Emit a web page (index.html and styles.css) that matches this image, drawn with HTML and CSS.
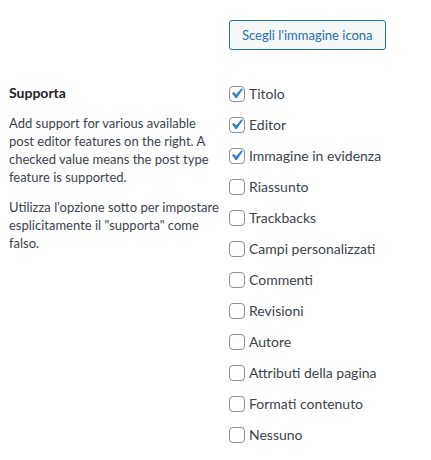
FILE: index.html
```html
<!DOCTYPE html>
<html lang="it">
<head>
<meta charset="utf-8">
<link rel="stylesheet" href="styles.css">
</head>
<body>
<div class="settings">
  <div class="row row-top">
    <div class="col-label"></div>
    <div class="col-field">
      <button class="button" type="button">Scegli l'immagine icona</button>
    </div>
  </div>
  <div class="row">
    <div class="col-label">
      <h3 class="heading">Supporta</h3>
      <p class="desc">Add support for various available post editor features on the right. A checked value means the post type feature is supported.</p>
      <p class="desc desc-nowrap">Utilizza l'opzione sotto per impostare<br>esplicitamente il "supporta" come<br>falso.</p>
    </div>
    <div class="col-field">
      <ul class="checks">
        <li class="check"><span class="box"><svg viewBox="0 0 20 20" class="tick"><path d="M14.83 4.89l1.34.94-5.81 8.38H9.02L5.78 9.67l1.34-1.25 2.57 2.4z"/></svg></span><span class="label">Titolo</span></li>
        <li class="check"><span class="box"><svg viewBox="0 0 20 20" class="tick"><path d="M14.83 4.89l1.34.94-5.81 8.38H9.02L5.78 9.67l1.34-1.25 2.57 2.4z"/></svg></span><span class="label">Editor</span></li>
        <li class="check"><span class="box"><svg viewBox="0 0 20 20" class="tick"><path d="M14.83 4.89l1.34.94-5.81 8.38H9.02L5.78 9.67l1.34-1.25 2.57 2.4z"/></svg></span><span class="label">Immagine in evidenza</span></li>
        <li class="check"><span class="box"></span><span class="label">Riassunto</span></li>
        <li class="check"><span class="box"></span><span class="label">Trackbacks</span></li>
        <li class="check"><span class="box"></span><span class="label">Campi personalizzati</span></li>
        <li class="check"><span class="box"></span><span class="label">Commenti</span></li>
        <li class="check"><span class="box"></span><span class="label">Revisioni</span></li>
        <li class="check"><span class="box"></span><span class="label">Autore</span></li>
        <li class="check"><span class="box"></span><span class="label">Attributi della pagina</span></li>
        <li class="check"><span class="box"></span><span class="label">Formati contenuto</span></li>
        <li class="check"><span class="box"></span><span class="label">Nessuno</span></li>
      </ul>
    </div>
  </div>
</div>
</body>
</html>
```

FILE: styles.css
```css
html, body {
  margin: 0;
  padding: 0;
  background: #ffffff;
}

body {
  font-family: Lato, "Liberation Sans", sans-serif;
  font-size: 13px;
  line-height: 18px;
  color: #3c434a;
}

.settings {
  padding: 20px 0 0 9px;
}

.row {
  display: grid;
  grid-template-columns: 220px 1fr;
}

.row-top {
  margin-bottom: 28px;
}

.button {
  display: inline-block;
  height: 30px;
  margin: 0;
  padding: 0 12px;
  font-family: inherit;
  font-size: 13px;
  line-height: 28px;
  color: #2271b1;
  background: #f6f7f7;
  border: 1px solid #2271b1;
  border-radius: 3px;
  cursor: pointer;
}

.heading {
  margin: 5px 0 0;
  font-size: 14px;
  line-height: 20px;
  font-weight: 700;
  color: #1d2327;
}

.desc {
  margin: 11px 0 0;
  padding-right: 16px;
}

.desc + .desc {
  margin-top: 12px;
}

.desc-nowrap {
  white-space: nowrap;
}

.checks {
  list-style: none;
  margin: 0;
  padding: 0;
}

.check {
  display: flex;
  align-items: center;
  height: 31px;
}

.box {
  flex: none;
  box-sizing: border-box;
  width: 16px;
  height: 16px;
  border: 1px solid #8c8f94;
  border-radius: 4px;
  background: #ffffff;
  position: relative;
}

.tick {
  position: absolute;
  left: -4px;
  top: -4px;
  width: 21px;
  height: 21px;
  fill: #3582c4;
}

.label {
  margin-left: 4px;
  font-size: 14px;
  line-height: 20px;
  color: #3c434a;
}
```
